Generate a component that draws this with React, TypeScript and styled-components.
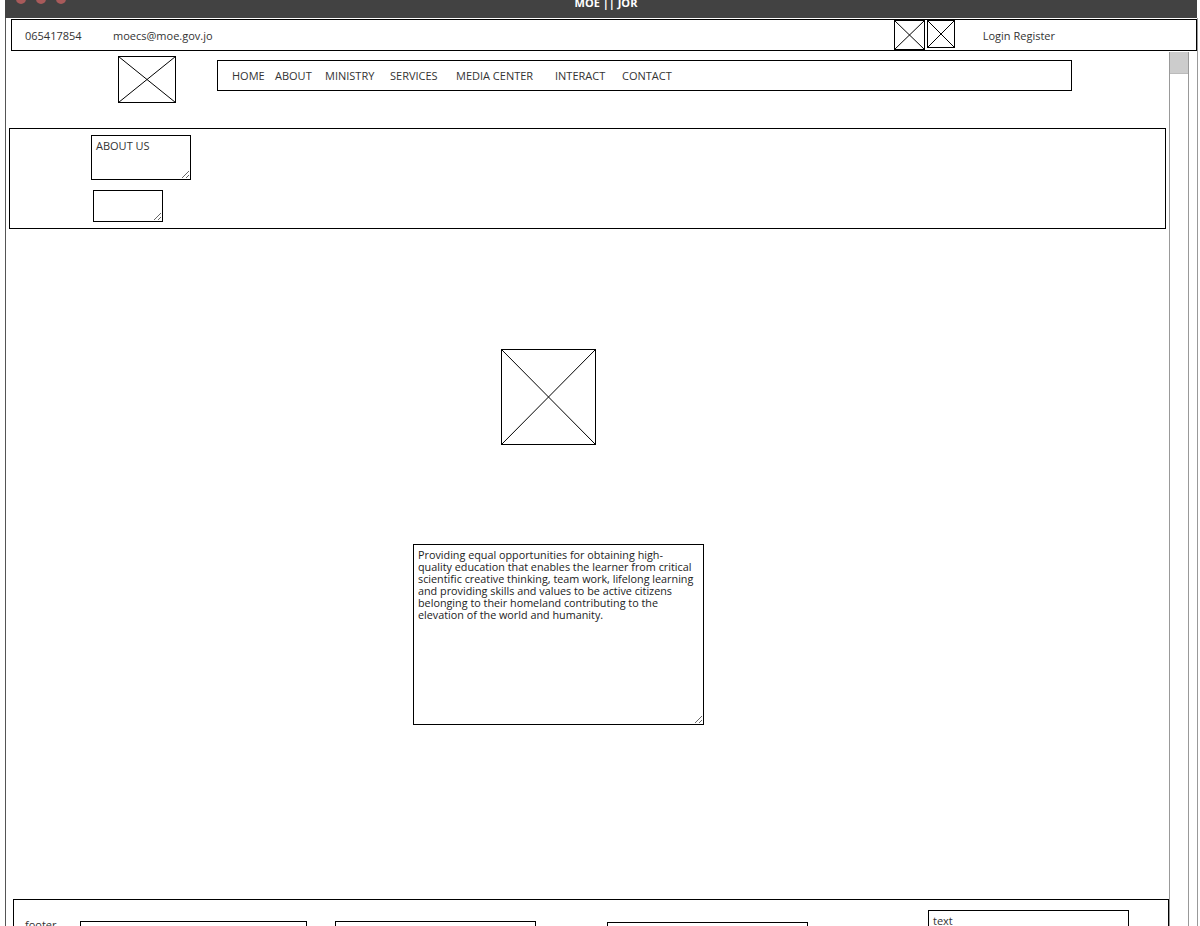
import styled, { createGlobalStyle } from "styled-components"

const GlobalStyle = createGlobalStyle`
    html, body {
        margin: 0;
        padding: 0;
        background: #ffffff;
        font-family: "Open Sans", "Liberation Sans", sans-serif;
    }
`

const Window = styled.div`
    width: 1200px;
    height: 926px;
    overflow: hidden;
    background: #ffffff;
`

const TitleBar = styled.div`
    position: relative;
    margin-left: 5px;
    width: 1192px;
    height: 18px;
    background: #424242;
    display: flex;
    justify-content: center;
`

const Dots = styled.div`
    position: absolute;
    left: 11px;
    top: -6px;
    display: flex;
    gap: 10px;
`

const Dot = styled.span`
    width: 10px;
    height: 10px;
    border-radius: 50%;
    background: #a85a5a;
`

const Title = styled.div`
    margin-top: -5px;
    margin-left: 10px;
    color: #ffffff;
    font-weight: 700;
    font-size: 11px;
    line-height: 16px;
`

const Frame = styled.div`
    margin-left: 5px;
    width: 1191px;
    height: 908px;
    border-left: 1px solid #555555;
    border-right: 1px solid #999999;
    display: flex;
    flex-direction: column;
`

const InfoBar = styled.div`
    margin: 1px 0 0 5px;
    height: 30px;
    flex-shrink: 0;
    border: 1px solid #000000;
    display: flex;
    align-items: center;
    font-size: 11px;
    color: #333333;
`

const InfoText = styled.span<{ $w?: number }>`
    ${(p) => (p.$w ? `width: ${p.$w}px;` : "")}
    flex-shrink: 0;
`

const InfoIcons = styled.div`
    margin-left: auto;
    display: flex;
    align-self: stretch;
    gap: 2px;
`

const Body = styled.div`
    flex: 1;
    display: flex;
    min-height: 0;
`

const Main = styled.div`
    width: 1163px;
    display: flex;
    flex-direction: column;
    & > * {
        flex-shrink: 0;
    }
`

const ScrollTrack = styled.div`
    margin-top: 1px;
    width: 18px;
    border-left: 1px solid #999999;
    border-right: 1px solid #999999;
`

const ScrollThumb = styled.div`
    height: 21px;
    background: #cccccc;
    border-bottom: 1px solid #bbbbbb;
`

const Header = styled.div`
    display: flex;
    align-items: flex-start;
    padding: 5px 0 0 112px;
`

const Nav = styled.nav`
    margin: 4px 0 0 41px;
    width: 839px;
    height: 29px;
    border: 1px solid #000000;
    display: flex;
    align-items: center;
    padding-left: 14px;
    box-sizing: content-box;
`

const NavItem = styled.span<{ $w?: number }>`
    ${(p) => (p.$w ? `width: ${p.$w}px;` : "")}
    flex-shrink: 0;
    font-size: 11px;
    color: #333333;
    white-space: nowrap;
`

const AboutBox = styled.section`
    margin: 25px 3px 0 3px;
    height: 93px;
    border: 1px solid #000000;
    padding: 6px 0 0 81px;
    box-sizing: content-box;
    display: flex;
    flex-direction: column;
    align-items: flex-start;
`

const Field = styled.textarea<{ $w: number; $h: number }>`
    width: ${(p) => p.$w}px;
    height: ${(p) => p.$h}px;
    flex-shrink: 0;
    box-sizing: border-box;
    border: 1px solid #000000;
    border-radius: 0;
    padding: 3px 4px;
    margin: 0;
    font-family: "Open Sans", "Liberation Sans", sans-serif;
    font-size: 11px;
    line-height: 14px;
    color: #333333;
    background: #ffffff;
    outline: none;
    overflow: hidden;
`

const SmallField = styled(Field)`
    margin: 10px 0 0 2px;
`

const MissionField = styled(Field)`
    margin: 99px 0 0 407px;
    padding: 4px 7px 4px 4px;
    font-size: 10.8px;
    line-height: 12px;
    color: #222222;
`

const HeroImage = styled.div`
    margin: 120px 0 0 495px;
    width: 95px;
    height: 96px;
`

const Footer = styled.footer`
    margin: 174px 0 0 7px;
    width: 1156px;
    height: 80px;
    box-sizing: border-box;
    border: 1px solid #000000;
    display: flex;
    align-items: flex-start;
    padding-left: 11px;
    font-size: 11px;
    color: #333333;
`

const FooterLabel = styled.span`
    width: 55px;
    margin-top: 17px;
    flex-shrink: 0;
`

const FooterBox = styled.div<{ $w: number; $top: number; $gap: number }>`
    width: ${(p) => p.$w}px;
    margin-top: ${(p) => p.$top}px;
    margin-left: ${(p) => p.$gap}px;
    height: 60px;
    border: 1px solid #000000;
    box-sizing: border-box;
    padding: 2px 4px;
    flex-shrink: 0;
`

const Placeholder = ({ w, h }: { w: number; h: number }) => (
    <svg width={w} height={h} viewBox={`0 0 ${w} ${h}`} style={{ display: "block" }}>
        <rect x="0.5" y="0.5" width={w - 1} height={h - 1} fill="#fff" stroke="#000" />
        <line x1="0.5" y1="0.5" x2={w - 0.5} y2={h - 0.5} stroke="#000" />
        <line x1={w - 0.5} y1="0.5" x2="0.5" y2={h - 0.5} stroke="#000" />
    </svg>
)

const navLinks: [string, number | undefined][] = [
    ["HOME", 43],
    ["ABOUT", 50],
    ["MINISTRY", 65],
    ["SERVICES", 66],
    ["MEDIA CENTER", 99],
    ["INTERACT", 67],
    ["CONTACT", undefined],
]

const mission =
    "Providing equal opportunities for obtaining high-quality education that enables the learner from critical scientific creative thinking, team work, lifelong learning and providing skills and values to be active citizens belonging to their homeland contributing to the elevation of the world and humanity."

export default function App() {
    return (
        <>
            <GlobalStyle />
            <Window>
                <TitleBar>
                    <Dots>
                        <Dot />
                        <Dot />
                        <Dot />
                    </Dots>
                    <Title>MOE || JOR</Title>
                </TitleBar>
                <Frame>
                    <InfoBar>
                        <InfoText style={{ marginLeft: 13 }} $w={88}>065417854</InfoText>
                        <InfoText>moecs@moe.gov.jo</InfoText>
                        <InfoIcons>
                            <Placeholder w={31} h={30} />
                            <Placeholder w={28} h={28} />
                        </InfoIcons>
                        <InfoText style={{ marginLeft: 28, marginRight: 141 }}>Login Register</InfoText>
                    </InfoBar>
                    <Body>
                        <Main>
                            <Header>
                                <Placeholder w={58} h={47} />
                                <Nav>
                                    {navLinks.map(([label, w]) => (
                                        <NavItem key={label} $w={w}>{label}</NavItem>
                                    ))}
                                </Nav>
                            </Header>
                            <AboutBox>
                                <Field $w={100} $h={45} readOnly defaultValue="ABOUT US" />
                                <SmallField $w={70} $h={32} readOnly defaultValue="" />
                            </AboutBox>
                            <HeroImage>
                                <Placeholder w={95} h={96} />
                            </HeroImage>
                            <MissionField $w={291} $h={181} readOnly defaultValue={mission} />
                            <Footer>
                                <FooterLabel>footer</FooterLabel>
                                <FooterBox $w={227} $top={21} $gap={0} />
                                <FooterBox $w={201} $top={21} $gap={28} />
                                <FooterBox $w={201} $top={22} $gap={71} />
                                <FooterBox $w={201} $top={10} $gap={120}>text</FooterBox>
                            </Footer>
                        </Main>
                        <ScrollTrack>
                            <ScrollThumb />
                        </ScrollTrack>
                    </Body>
                </Frame>
            </Window>
        </>
    )
}
